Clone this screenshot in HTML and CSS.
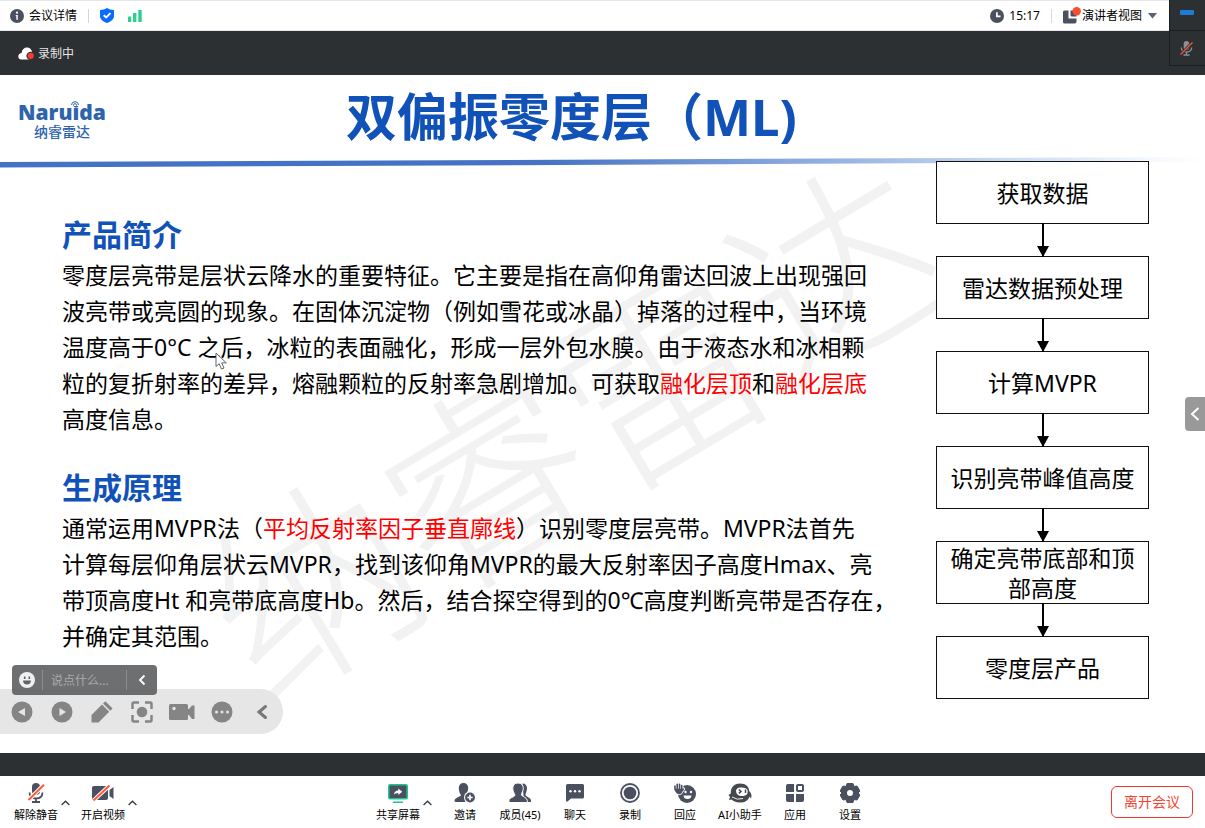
FILE: index.html
```html
<!DOCTYPE html>
<html lang="zh-CN">
<head>
<meta charset="utf-8">
<meta name="viewport" content="width=device-width, initial-scale=1">
<title>会议</title>
<link rel="stylesheet" href="styles.css">
</head>
<body>
<div class="app">
  <header class="topbar">
    <div class="topbar-group">
      <button class="top-button" type="button">
        <svg width="14" height="14" viewBox="0 0 14 14"><circle cx="7" cy="7" r="7" fill="#4a5060"/><circle cx="7" cy="3.7" r="1.1" fill="#fff"/><path d="M5.7 6H7.8V10.8H6.3V7.1H5.7Z" fill="#fff"/></svg>
        <span>会议详情</span>
      </button>
      <span class="divider"></span>
      <svg class="shield" width="14" height="15" viewBox="0 0 14 15"><path d="M7 0C9 1.3 11 1.8 14 1.9V8C14 11.400 11 13.700 7 15C3 13.700 0 11.400 0 8V1.900C3 1.800 5 1.300 7 0Z" fill="#0a6cff"/><path d="M3.700 7.200L6.200 9.500L10.400 5.200" fill="none" stroke="#fff" stroke-width="1.900"/></svg>
      <svg width="14" height="12" viewBox="0 0 14 12"><rect y="6.500" width="3.300" height="5.500" rx=".6" fill="#2bd08f"/><rect x="5" y="3" width="3.400" height="9" rx=".6" fill="#2bd08f"/><rect x="10.300" width="3.400" height="12" rx=".6" fill="#2bd08f"/></svg>
    </div>
    <div class="topbar-group topbar-right">
      <svg width="14" height="14" viewBox="0 0 14 14"><circle cx="7" cy="7" r="7" fill="#4a5060"/><path d="M6.900 3.300V7.300H10.500" fill="none" stroke="#fff" stroke-width="1.700"/></svg>
      <time class="clock">15:17</time>
      <span class="divider"></span>
      <button class="top-button view-button" type="button" aria-haspopup="menu">
        <svg width="18" height="18" viewBox="0 0 18 18"><path d="M1.500 3.500H5.500V11.500H13.500V14.500Q13.500 16.500 11.500 16.500H1.500Q0 16.500 0 15V5Q0 3.500 1.500 3.500Z" fill="#4a5060"/><path d="M7.500 3.500H13.500V9.500H9Q7.500 9.500 7.500 8Z" fill="#4a5060"/><circle cx="13.700" cy="4.200" r="4.200" fill="#ff4b30"/></svg>
        <span>演讲者视图</span>
        <svg class="drop" width="9" height="6" viewBox="0 0 9 6"><path d="M0 0H9L4.500 5.500Z" fill="#5a6070"/></svg>
      </button>
    </div>
    <aside class="self-view">
      <button class="tile" type="button" aria-label="最小化"><span class="minus"></span></button>
      <div class="tile">
        <svg width="13" height="15" viewBox="0 0 13 15"><rect x="3.700" y="0" width="5.600" height="9" rx="2.800" fill="#8c9094"/><path d="M1.300 6.500Q1.500 11 6.500 11T11.700 6.500M6.500 11V14M3.500 14H9.500" fill="none" stroke="#8c9094" stroke-width="1.300"/><path d="M.5 13.500L12.500 1.500" stroke="#2d3033" stroke-width="3"/><path d="M.5 13.500L12.500 1.500" stroke="#f0503c" stroke-width="1.400"/></svg>
      </div>
    </aside>
  </header>

  <div class="recording">
    <svg width="17" height="13" viewBox="0 0 17 13"><path d="M3.500 12.500C1.500 12.500 .3 11 .3 9.400C.3 7.500 2 6.200 3.600 6C4 2.500 6.300 .6 9 .6C11.800 .6 14 2.800 14 5.500V12.500Z" fill="#fff"/><circle cx="12.600" cy="8.900" r="4.200" fill="#2d3033"/><circle cx="12.700" cy="8.800" r="3.100" fill="#f93b30"/></svg>
    <span>录制中</span>
  </div>

  <main class="slide">
    <div class="watermark" aria-hidden="true">纳睿雷达</div>
    <div class="slide-head">
      <div class="brand">
        <strong class="brand-name">Naruida</strong>
        <svg class="brand-wave" width="8" height="5" viewBox="0 0 8 5"><rect width="8" height="5" fill="#fff"/><path d="M.5 4Q.5 .7 4 .7T7.500 4M2.400 4.600Q2.400 2.600 4 2.600T5.600 4.600" fill="none" stroke="#2e64ab"/></svg>
        <span class="brand-cn">纳睿雷达</span>
      </div>
      <h1 class="title">双偏振零度层（ML)</h1>
    </div>
    <svg class="rule" width="100%" height="11" viewBox="0 0 1205 11" preserveAspectRatio="none">
      <defs><linearGradient id="fade"><stop offset="0" stop-color="#4472c4"/><stop offset=".45" stop-color="#4472c4"/><stop offset=".67" stop-color="#8dabdf"/><stop offset=".84" stop-color="#cbdcf4"/><stop offset=".96" stop-color="#f6f9fe"/><stop offset="1" stop-color="#fff"/></linearGradient></defs>
      <path d="M0 5L1205 0V5L0 10.500Z" fill="url(#fade)"/>
    </svg>
    <div class="slide-body">
      <div class="copy">
        <section>
          <h2>产品简介</h2>
          <p>零度层亮带是层状云降水的重要特征。它主要是指在高仰角雷达回波上出现强回<br>波亮带或亮圆的现象。在固体沉淀物（例如雪花或冰晶）掉落的过程中，当环境<br>温度高于0°C 之后，冰粒的表面融化，形成一层外包水膜。由于液态水和冰相颗<br>粒的复折射率的差异，熔融颗粒的反射率急剧增加。可获取<em>融化层顶</em>和<em>融化层底</em><br>高度信息。</p>
        </section>
        <section>
          <h2>生成原理</h2>
          <p>通常运用MVPR法（<em>平均反射率因子垂直廓线</em>）识别零度层亮带。MVPR法首先<br>计算每层仰角层状云MVPR，找到该仰角MVPR的最大反射率因子高度Hmax、亮<br>带顶高度Ht 和亮带底高度Hb。然后，结合探空得到的0℃高度判断亮带是否存在，<br>并确定其范围。</p>
        </section>
      </div>
      <ol class="flow">
        <li>获取数据</li>
        <li>雷达数据预处理</li>
        <li>计算MVPR</li>
        <li>识别亮带峰值高度</li>
        <li>确定亮带底部和顶部高度</li>
        <li>零度层产品</li>
      </ol>
    </div>

    <svg class="pointer" width="13" height="19" viewBox="0 0 13 19"><path d="M1 1V14.500L4.200 11.700L6.500 17L9 16L6.700 10.900H11.300Z" fill="#fff" stroke="#50545e" stroke-width=".9"/></svg>

    <div class="presenter">
      <button type="button" aria-label="上一页"><svg width="22" height="22" viewBox="0 0 22 22"><circle cx="11" cy="11" r="10.500" fill="#858585"/><path d="M14 7V15L7 11Z" fill="#e6e6e6"/></svg></button>
      <button type="button" aria-label="下一页"><svg width="22" height="22" viewBox="0 0 22 22"><circle cx="11" cy="11" r="10.500" fill="#858585"/><path d="M8.500 7V15L15 11Z" fill="#e6e6e6"/></svg></button>
      <button type="button" aria-label="画笔"><svg width="22" height="22" viewBox="0 0 22 22"><path d="M.5 21.500V14L11 3.500L18.200 10.700L7.500 21.500Z" fill="#858585"/><path d="M12 2.600L14.400 .3L21.600 7.500L19.200 9.800Z" fill="#858585"/></svg></button>
      <button type="button" aria-label="聚焦"><svg width="22" height="22" viewBox="0 0 22 22"><circle cx="11" cy="11" r="5.300" fill="#858585"/><path d="M1.500 8V3Q1.500 1.500 3 1.500H8M14 1.500H19Q20.500 1.500 20.500 3V8M20.500 14V19Q20.500 20.500 19 20.500H14M8 20.500H3Q1.500 20.500 1.500 19V14" fill="none" stroke="#858585" stroke-width="2.500"/></svg></button>
      <button type="button" aria-label="摄像头"><svg width="26" height="18" viewBox="0 0 26 18"><rect x="0" y="1" width="19" height="16" rx="1.500" fill="#858585"/><path d="M18 6H20L23 2.500H25.500V16H23L20 12H18Z" fill="#858585"/><circle cx="5" cy="5.500" r="1.700" fill="#e6e6e6"/></svg></button>
      <button type="button" aria-label="更多"><svg width="22" height="22" viewBox="0 0 22 22"><circle cx="11" cy="11" r="10.500" fill="#858585"/><circle cx="5.500" cy="11" r="1.500" fill="#e6e6e6"/><circle cx="11" cy="11" r="1.500" fill="#e6e6e6"/><circle cx="16.500" cy="11" r="1.500" fill="#e6e6e6"/></svg></button>
      <button type="button" aria-label="收起"><svg width="12" height="16" viewBox="0 0 12 16"><path d="M9.500 2.500L3 8L9.500 13.500" fill="none" stroke="#777" stroke-width="3" stroke-linecap="round"/></svg></button>
    </div>

    <form class="chat">
      <button type="button" aria-label="表情"><svg width="16" height="16" viewBox="0 0 16 16"><circle cx="8" cy="8" r="8" fill="#f0f0f0"/><path d="M5.700 4.500V7M10.300 4.500V7" stroke="#606264" stroke-width="1.600"/><path d="M4 8.600H12Q11.700 12.500 8 12.500T4 8.600Z" fill="#606264"/></svg></button>
      <input type="text" aria-label="发送消息" placeholder="说点什么...">
      <button type="button" aria-label="收起聊天"><svg width="8" height="12" viewBox="0 0 8 12"><path d="M6.500 1.500L2 6L6.500 10.500" fill="none" stroke="#fff" stroke-width="1.900"/></svg></button>
    </form>

    <button class="drawer" type="button" aria-label="展开侧栏"><svg width="10" height="16" viewBox="0 0 10 16"><path d="M8.500 2L2 8L8.500 14" fill="none" stroke="#fff" stroke-width="2"/></svg></button>
  </main>

  <footer class="toolbar">
    <div class="tools">
      <div class="split">
        <button class="tool" type="button">
          <svg width="20" height="20" viewBox="0 0 20 20"><rect x="6" y="0" width="8" height="12" rx="4" fill="#4a5060"/><path d="M3.500 9.500Q3.700 15.500 10 15.500T16.500 9.500M10 15.500V18.500M6 19H14" fill="none" stroke="#4a5060" stroke-width="1.800"/><path d="M2.500 17L18 1.800" stroke="#fff" stroke-width="4"/><path d="M2.500 17L18 1.800" stroke="#ff5a3c" stroke-width="2"/></svg>
          <span>解除静音</span>
        </button>
        <button class="more" type="button" aria-label="音频选项"><svg width="9" height="6" viewBox="0 0 9 6"><path d="M.6 5L4.500 1.200L8.400 5" fill="none" stroke="#333945" stroke-width="1.300"/></svg></button>
      </div>
      <div class="split">
        <button class="tool" type="button">
          <svg width="22" height="20" viewBox="0 0 22 20"><rect x="0" y="3" width="16" height="14" rx="2" fill="#4a5060"/><path d="M17.500 7L21.500 4V16L17.500 13Z" fill="#4a5060"/><path d="M1.500 17.500L17.500 2.500" stroke="#fff" stroke-width="4"/><path d="M1.500 17.500L17.500 2.500" stroke="#ff5a3c" stroke-width="2"/></svg>
          <span>开启视频</span>
        </button>
        <button class="more" type="button" aria-label="视频选项"><svg width="9" height="6" viewBox="0 0 9 6"><path d="M.6 5L4.500 1.200L8.400 5" fill="none" stroke="#333945" stroke-width="1.300"/></svg></button>
      </div>
    </div>

    <div class="tools">
      <div class="split">
        <button class="tool" type="button">
          <svg width="20" height="20" viewBox="0 0 20 20"><rect x=".8" y="1.800" width="18.400" height="14" rx="1.200" fill="#4a5060" stroke="#20c48c" stroke-width="1.600"/><path d="M6 11.500Q6.300 7.800 10.300 7.500V5.500L14.200 8.800L10.300 12V10Q7.500 9.800 6 11.500Z" fill="#fff"/><path d="M5.500 19.200H14.500" stroke="#20c48c" stroke-width="1.600" stroke-linecap="round"/></svg>
          <span>共享屏幕</span>
        </button>
        <button class="more" type="button" aria-label="共享选项"><svg width="9" height="6" viewBox="0 0 9 6"><path d="M.6 5L4.500 1.200L8.400 5" fill="none" stroke="#333945" stroke-width="1.300"/></svg></button>
      </div>
      <button class="tool" type="button">
        <svg width="22" height="20" viewBox="0 0 22 20"><path d="M9.500 0C12.500 0 14.200 2 14.200 5C14.200 7.500 13 9.500 12 11L11.500 19H2C.5 19 .2 17.500 .8 16.500C2 14.500 7 13.500 7 12C5.500 10 4.800 7.500 4.800 5C4.800 2 6.500 0 9.500 0Z" fill="#4a5060"/><circle cx="16" cy="14.500" r="6" fill="#fff"/><circle cx="16" cy="14.500" r="4.900" fill="#4a5060"/><path d="M16 11.800V17.200M13.300 14.500H18.700" stroke="#fff" stroke-width="1.600"/></svg>
        <span>邀请</span>
      </button>
      <button class="tool" type="button">
        <svg width="22" height="20" viewBox="0 0 22 20"><path d="M13.500 .5C16.500 .5 18 2.500 18 5.500C18 8 16.500 10 16.500 12C17 13.500 22 15 22 17.500V19H15Z" fill="#4a5060"/><path d="M9 0C12.500 0 14.300 2.200 14.300 5.300C14.300 8 12.500 9.800 12.500 12C13 13.600 18 14.300 18.300 17.500V19.500H0V17.500C0 14.500 6 14 6 12C5 10 3.800 8 3.800 5.300C3.800 2.200 5.500 0 9 0Z" fill="#4a5060" stroke="#fff" stroke-width="1"/></svg>
        <span>成员(45)</span>
      </button>
      <button class="tool" type="button">
        <svg width="18" height="20" viewBox="0 0 18 20"><path d="M1.500 1H16.500Q18 1 18 2.500V14Q18 15.500 16.500 15.500H5L1.500 18.500Q0 19 0 17.500V2.500Q0 1 1.500 1Z" fill="#4a5060"/><circle cx="4.500" cy="8.300" r="1.200" fill="#fff"/><circle cx="9" cy="8.300" r="1.200" fill="#fff"/><circle cx="13.500" cy="8.300" r="1.200" fill="#fff"/></svg>
        <span>聊天</span>
      </button>
      <button class="tool" type="button">
        <svg width="20" height="20" viewBox="0 0 20 20"><circle cx="10" cy="10" r="9" fill="none" stroke="#4a5060" stroke-width="1.800"/><circle cx="10" cy="10" r="6.300" fill="#4a5060"/></svg>
        <span>录制</span>
      </button>
      <button class="tool" type="button">
        <svg width="22" height="20" viewBox="0 0 22 20"><circle cx="13" cy="11" r="9" fill="#4a5060"/><circle cx="11.500" cy="9" r="1.200" fill="#fff"/><circle cx="17" cy="9" r="1.200" fill="#fff"/><path d="M9.500 12.500H17.500Q17 16 13.500 16T9.500 12.500Z" fill="#fff"/><path d="M1 6.500V3M3.200 6V1.200M5.500 6V1.200M7.700 7V2.500M1.300 6.500H7.500V8Q7.500 10.500 4.800 10.500Q2.500 10 1.300 6.500M7.500 8.500L9.500 6" fill="#4a5060" stroke="#fff" stroke-width="3.200" stroke-linecap="round"/><path d="M1 6.500V3M3.200 6V1.200M5.500 6V1.200M7.700 7V2.500M1.300 6.500H7.500V8Q7.500 10.500 4.800 10.500Q2.500 10 1.300 6.500M7.500 8.500L9.500 6" fill="#4a5060" stroke="#4a5060" stroke-width="1.600" stroke-linecap="round"/></svg>
        <span>回应</span>
      </button>
      <button class="tool" type="button">
        <svg width="24" height="20" viewBox="0 0 24 20"><path d="M12 .5C18 .5 21 4 21.200 8C23.500 10 24 13 23 15.500L21.500 13.500C20 17.500 17 19.500 12 19.500C7.500 19.500 5 18 3.500 16.500L1 17L2 14L.5 12L2.800 10.500C2.500 5 5.500 .5 12 .5Z" fill="#45484c"/><path d="M8 7.500Q9 4 13.500 4.500Q18.500 4.500 19.500 7Q20.500 11.500 16.500 12.800Q8 14 8 7.500Z" fill="#fff"/><path d="M10.800 6.500L13 8.500L10.800 10.300M17.500 6.500V10" fill="none" stroke="#45484c" stroke-width="1.500"/><path d="M4 14Q9 17.500 15 15.500" fill="none" stroke="#fff" stroke-width=".9"/></svg>
        <span>AI小助手</span>
      </button>
      <button class="tool" type="button">
        <svg width="20" height="20" viewBox="0 0 20 20"><path d="M3 1H9V9H1V3Q1 1 3 1ZM1 11H9V19H3Q1 19 1 17ZM11 11H19V17Q19 19 17 19H11Z" fill="#4a5060"/><rect x="12" y="2" width="6" height="6" rx="1" fill="none" stroke="#4a5060" stroke-width="2"/></svg>
        <span>应用</span>
      </button>
      <button class="tool" type="button">
        <svg width="20" height="20" viewBox="0 0 20 20"><path d="M7 .5H13L14 3.500L17 3L20 8L18 10L20 12L17 17L14 16.500L13 19.500H7L6 16.500L3 17L0 12L2 10L0 8L3 3L6 3.500Z" fill="#4a5060" stroke="#4a5060" stroke-linejoin="round"/><circle cx="10" cy="10" r="3" fill="#fff"/></svg>
        <span>设置</span>
      </button>
    </div>

    <button class="leave" type="button">离开会议</button>
  </footer>
</div>
</body>
</html>
```
FILE: styles.css
```css
* {
  box-sizing: border-box;
}

body {
  margin: 0;
  background: #fff;
  color: #000;
  font: 12px/16px "Noto Sans", "Noto Sans CJK SC", sans-serif;
}

button,
input {
  margin: 0;
  padding: 0;
  border: 0;
  background: none;
  color: inherit;
  font: inherit;
}

svg {
  display: block;
  flex: none;
}

.app {
  display: flex;
  flex-direction: column;
  min-height: 100vh;
}

/* Top bar */
.topbar {
  position: relative;
  display: flex;
  justify-content: space-between;
  height: 31px;
  padding: 0 48px 0 10px;
  border-top: 1px solid #e6e7ee;
  border-bottom: 1px solid #e6e7ee;
}

.topbar-group,
.top-button {
  display: flex;
  align-items: center;
}

.top-button {
  gap: 5px;
}

.divider {
  width: 1px;
  height: 14px;
  margin: 0 11px;
  background: #d5d7dc;
}

.shield {
  margin-right: 14px;
}

.clock {
  margin-left: 5px;
}

.view-button {
  gap: 1px;
}

.drop {
  margin-left: 5px;
}

.self-view {
  position: absolute;
  top: -1px;
  right: 0;
  z-index: 2;
  width: 36px;
  border-left: 1px solid #1b1d1f;
  background: #2d3033;
}

.tile {
  display: flex;
  align-items: center;
  width: 100%;
  height: 35px;
  padding-left: 10px;
  border-bottom: 1px solid #1b1d1f;
}

.tile:first-child {
  height: 31px;
  padding-bottom: 6px;
}

.minus {
  width: 14px;
  height: 5px;
  border-radius: 1px;
  background: #1f7ad6;
}

/* Recording strip */
.recording {
  display: flex;
  align-items: center;
  gap: 3px;
  height: 44px;
  padding: 1px 0 0 18px;
  background: #2d3033;
  color: #e4e5e6;
}

/* Shared slide */
.slide {
  position: relative;
  flex: 1;
}

.watermark {
  position: absolute;
  top: 224px;
  left: 160px;
  color: #f2f2f2;
  font: 300 204px/240px "Noto Sans CJK SC", sans-serif;
  white-space: nowrap;
  transform: rotate(-31deg);
}

.slide-head {
  position: relative;
  display: grid;
  grid-template-columns: 328px 1fr;
  align-items: center;
  height: 82px;
  padding-left: 18px;
}

.brand {
  position: relative;
  display: flex;
  flex-direction: column;
  justify-self: start;
  align-items: center;
  padding-top: 8px;
  color: #2e64ab;
}

.brand-name {
  font: 800 21px/22px "Open Sans", sans-serif;
}

.brand-wave {
  position: absolute;
  top: 8px;
  left: 53px;
}

.brand-cn {
  font: 500 14px/16px "Noto Sans CJK SC", sans-serif;
}

.title {
  margin: 0;
  color: #1152b8;
  font: 700 51px/64px "Noto Sans", "Noto Sans CJK SC", sans-serif;
}

.rule {
  position: relative;
}

.slide-body {
  position: relative;
  display: flex;
  justify-content: space-between;
  align-items: flex-start;
  padding: 0 56px 0 62px;
}

.copy {
  display: flex;
  flex-direction: column;
  gap: 33px;
  padding-top: 45px;
}

.copy h2 {
  margin: 0;
  padding-bottom: 4px;
  color: #1152b8;
  font: 700 30px/40px "Noto Sans CJK SC", sans-serif;
}

.copy section + section {
  margin-top: -4px;
}

.copy p {
  margin: 0;
  font-size: 23px;
  line-height: 36px;
  white-space: nowrap;
}

.copy em {
  color: #f00;
  font-style: normal;
}

.flow {
  display: flex;
  flex-direction: column;
  gap: 32px;
  width: 213px;
  margin: -7px 0 0;
  padding: 0;
  list-style: none;
}

.flow li {
  position: relative;
  display: flex;
  align-items: center;
  justify-content: center;
  min-height: 63px;
  padding: 0 13px;
  border: 1px solid #111;
  background: #fff;
  font-size: 23px;
  line-height: 30px;
  text-align: center;
}

.flow li + li::before,
.flow li + li::after {
  position: absolute;
  bottom: 100%;
  left: 50%;
  content: "";
  transform: translateX(-50%);
}

.flow li + li::before {
  width: 2px;
  height: 34px;
  background: #000;
}

.flow li + li::after {
  border: 6px solid transparent;
  border-top: 11px solid #000;
  border-bottom: 0;
}

.pointer {
  position: absolute;
  top: 277px;
  left: 215px;
}

.presenter {
  position: absolute;
  bottom: 19px;
  left: 0;
  display: flex;
  align-items: center;
  gap: 18px;
  height: 45px;
  padding: 0 10px 0 11px;
  border-radius: 0 23px 23px 0;
  background: #e6e6e6;
}

.presenter button {
  display: flex;
  justify-content: center;
  width: 22px;
}

.chat {
  position: absolute;
  bottom: 58px;
  left: 12px;
  display: flex;
  align-items: center;
  width: 145px;
  height: 30px;
  border-radius: 4px;
  background: rgba(84, 86, 88, 0.85);
}

.chat button {
  display: flex;
  flex: 1;
  justify-content: center;
}

.chat input {
  width: 85px;
  height: 20px;
  padding-left: 8px;
  border: solid #8c8e90;
  border-width: 0 1px;
}

.chat input::placeholder {
  color: #a9abad;
  opacity: 1;
}

.drawer {
  position: absolute;
  top: 322px;
  right: 0;
  display: grid;
  place-items: center;
  width: 20px;
  height: 34px;
  border-radius: 4px 0 0 4px;
  background: #999;
}

/* Meeting controls */
.toolbar {
  position: relative;
  display: flex;
  justify-content: space-between;
  align-items: center;
  height: 75px;
  padding: 0 12px 0 14px;
  border-top: 23px solid #2d3033;
}

.tools,
.split {
  display: flex;
}

.tools {
  gap: 11px;
  padding-top: 2px;
}

.split {
  align-items: center;
}

.tool {
  display: flex;
  flex-direction: column;
  align-items: center;
  gap: 4px;
  width: 44px;
  font-size: 11px;
  white-space: nowrap;
}

.more {
  display: flex;
  justify-content: flex-end;
  width: 12px;
}

.leave {
  width: 82px;
  height: 32px;
  border: 1px solid #ee3b27;
  border-radius: 6px;
  color: #f5432f;
  font-size: 14px;
}
```
